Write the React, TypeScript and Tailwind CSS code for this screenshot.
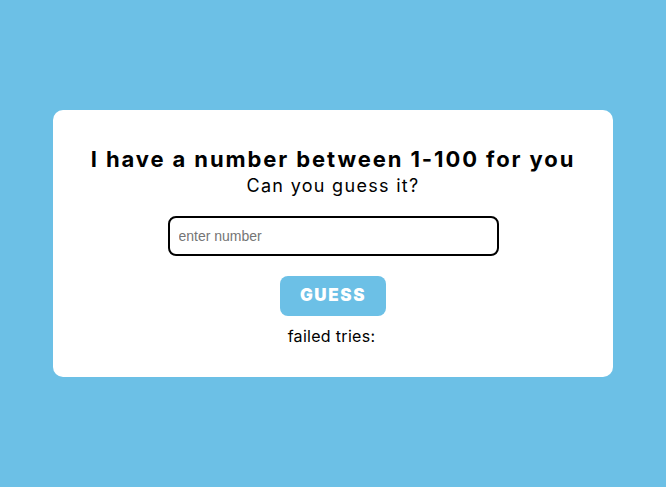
import React from "react";

export default function App() {
  return (
    <div className="min-h-screen w-full bg-[#6cc0e6] flex items-center justify-center">
      <div className="w-[560px] h-[267px] bg-white rounded-[10px] flex flex-col items-center pt-[35px]" style={{ fontFamily: "Inter, 'Noto Sans', sans-serif" }}>
        <h1 className="text-[22px] leading-[28px] font-bold text-black tracking-[1.9px]">I have a number between 1-100 for you</h1>
        <p className="text-[18px] leading-[24px] text-black mt-[1px] tracking-[1.3px]">Can you guess it?</p>
        <input
          type="text"
          placeholder="enter number"
          className="mt-[18px] w-[331px] h-[40px] border-2 border-black rounded-[8px] px-[9px] text-[14px] placeholder:text-[#757575] outline-none"
          style={{ fontFamily: "'Liberation Sans', Arial, sans-serif" }}
        />
        <button className="mt-[20px] w-[106px] h-[40px] bg-[#6cc0e6] rounded-[8px] text-white font-black text-[17px] tracking-[1.6px]">
          GUESS
        </button>
        <p className="mt-[9px] mr-[3px] text-[16px] leading-[22px] text-black tracking-[0.3px]">failed tries:</p>
      </div>
    </div>
  );
}
